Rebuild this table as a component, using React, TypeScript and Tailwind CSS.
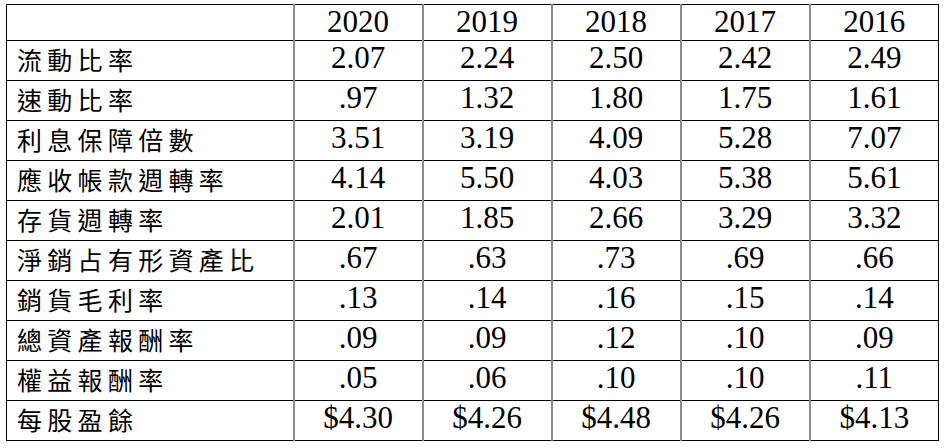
const years = ['2020', '2019', '2018', '2017', '2016']

const rows: { label: string; values: string[] }[] = [
  { label: '流動比率', values: ['2.07', '2.24', '2.50', '2.42', '2.49'] },
  { label: '速動比率', values: ['.97', '1.32', '1.80', '1.75', '1.61'] },
  { label: '利息保障倍數', values: ['3.51', '3.19', '4.09', '5.28', '7.07'] },
  { label: '應收帳款週轉率', values: ['4.14', '5.50', '4.03', '5.38', '5.61'] },
  { label: '存貨週轉率', values: ['2.01', '1.85', '2.66', '3.29', '3.32'] },
  { label: '淨銷占有形資產比', values: ['.67', '.63', '.73', '.69', '.66'] },
  { label: '銷貨毛利率', values: ['.13', '.14', '.16', '.15', '.14'] },
  { label: '總資產報酬率', values: ['.09', '.09', '.12', '.10', '.09'] },
  { label: '權益報酬率', values: ['.05', '.06', '.10', '.10', '.11'] },
  { label: '每股盈餘', values: ['$4.30', '$4.26', '$4.48', '$4.26', '$4.13'] },
]

function NumCell({ value }: { value: string }) {
  return (
    <td className="w-[129px] border-l-2 border-l-[#8c8c8c] border-b border-b-black p-0 pt-[1px] text-center align-top font-[Liberation_Serif,serif] text-[31px] leading-none text-black">
      {value}
    </td>
  )
}

export default function App() {
  return (
    <div className="h-[448px] w-[946px] bg-white pl-[6px] pt-[4px]">
      <table className="w-[932px] table-fixed border-collapse border-t border-r border-l border-black font-serif">
        <colgroup>
          <col className="w-[287px]" />
          {years.map((y) => (
            <col key={y} className="w-[129px]" />
          ))}
        </colgroup>
        <tbody>
          <tr className="h-[36px]">
            <td className="border-b border-b-black p-0" />
            {years.map((y) => (
              <NumCell key={y} value={y} />
            ))}
          </tr>
          {rows.map((row) => (
            <tr key={row.label} className="h-[40px]">
              <td className="border-b border-b-black p-0 pb-[2px] pl-[10px] font-[Noto_Sans_CJK_TC,sans-serif] text-[25px] leading-none font-normal tracking-[5.3px] text-black">
                {row.label}
              </td>
              {row.values.map((v, i) => (
                <NumCell key={i} value={v} />
              ))}
            </tr>
          ))}
        </tbody>
      </table>
    </div>
  )
}
